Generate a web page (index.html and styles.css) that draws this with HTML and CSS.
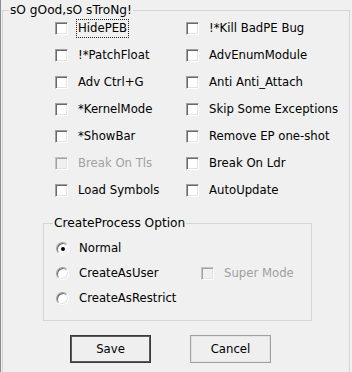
FILE: index.html
```html
<!DOCTYPE html>
<html lang="en">
<head>
    <meta charset="UTF-8">
    <meta name="viewport" content="width=device-width, initial-scale=1.0">
    <title>Options</title>
    <link rel="stylesheet" href="styles.css">
</head>
<body>
    <fieldset class="group main-group">
        <legend>sO gOod,sO sTroNg!</legend>

        <div class="opts">
            <label class="opt"><span class="box"></span><span class="txt focus">HidePEB</span></label>
            <label class="opt"><span class="box"></span><span class="txt">!*Kill BadPE Bug</span></label>
            <label class="opt"><span class="box"></span><span class="txt">!*PatchFloat</span></label>
            <label class="opt"><span class="box"></span><span class="txt">AdvEnumModule</span></label>
            <label class="opt"><span class="box"></span><span class="txt">Adv Ctrl+G</span></label>
            <label class="opt"><span class="box"></span><span class="txt">Anti Anti_Attach</span></label>
            <label class="opt"><span class="box"></span><span class="txt">*KernelMode</span></label>
            <label class="opt"><span class="box"></span><span class="txt">Skip Some Exceptions</span></label>
            <label class="opt"><span class="box"></span><span class="txt">*ShowBar</span></label>
            <label class="opt"><span class="box"></span><span class="txt">Remove EP one-shot</span></label>
            <label class="opt disabled"><span class="box"></span><span class="txt">Break On Tls</span></label>
            <label class="opt"><span class="box"></span><span class="txt">Break On Ldr</span></label>
            <label class="opt"><span class="box"></span><span class="txt">Load Symbols</span></label>
            <label class="opt"><span class="box"></span><span class="txt">AutoUpdate</span></label>
        </div>

        <fieldset class="group proc-group">
            <legend>CreateProcess Option</legend>
            <div class="proc-opts">
                <label class="opt"><span class="radio checked"></span><span class="txt">Normal</span></label>
                <span></span>
                <label class="opt"><span class="radio"></span><span class="txt">CreateAsUser</span></label>
                <label class="opt disabled"><span class="box"></span><span class="txt">Super Mode</span></label>
                <label class="opt"><span class="radio"></span><span class="txt">CreateAsRestrict</span></label>
            </div>
        </fieldset>

        <div class="buttons">
            <button class="btn btn-default">Save</button>
            <button class="btn">Cancel</button>
        </div>
    </fieldset>
</body>
</html>
```

FILE: styles.css
```css
html, body {
    margin: 0;
    height: 100%;
    overflow: hidden;
}
body {
    background-color: #f0f0f0;
    font-family: "DejaVu Sans", Tahoma, sans-serif;
    font-size: 11.7px;
    color: #000;
    box-shadow: inset 1px 0 0 #8c8c8c;
}
.group {
    border: 1px solid #d5d5d5;
    margin: 0;
    padding: 0;
    min-width: 0;
}
.group legend {
    padding: 0 1px;
    line-height: 14px;
    font-size: 12.2px;
}
.main-group {
    margin: 3px 2px 0 2px;
    height: 420px;
}
.main-group > legend {
    margin-left: 6px;
}
.opts {
    display: grid;
    grid-template-columns: 131px auto;
    grid-auto-rows: 13px;
    row-gap: 14px;
    padding: 5px 0 0 52px;
}
.opt {
    display: flex;
    align-items: center;
    gap: 8px;
    height: 13px;
    white-space: nowrap;
}
.txt {
    display: inline-block;
    line-height: 13px;
    padding: 0 1px;
    border: 1px solid transparent;
}
.txt.focus {
    border: 1px dotted #222;
    padding: 2px 1px;
    margin: -3px 0;
}
.box {
    flex: none;
    width: 13px;
    height: 13px;
    box-sizing: border-box;
    background-color: #fff;
    border: 1px solid;
    border-color: #a0a0a0 #fff #fff #a0a0a0;
    box-shadow: inset 1px 1px 0 #696969, inset -1px -1px 0 #e3e3e3;
}
.radio {
    flex: none;
    position: relative;
    width: 13px;
    height: 13px;
    border-radius: 50%;
    box-sizing: border-box;
    background-color: #fff;
    border: 1px solid;
    border-color: #a0a0a0 #fff #fff #a0a0a0;
    box-shadow: inset 1px 1px 0 #696969, inset -1px -1px 0 #e3e3e3;
}
.radio.checked::after {
    content: "";
    position: absolute;
    left: 4px;
    top: 4px;
    width: 4px;
    height: 4px;
    border-radius: 50%;
    background-color: #000;
}
.disabled {
    color: #a0a0a0;
}
.disabled .box {
    background-color: #f0f0f0;
    border-color: #c4c4c4 #fff #fff #c4c4c4;
    box-shadow: inset 1px 1px 0 #a0a0a0, inset -1px -1px 0 #e3e3e3;
}
.proc-group {
    margin: 19px 0 0 40px;
    width: 269px;
    box-sizing: border-box;
}
.proc-group > legend {
    margin-left: 9px;
}
.proc-opts {
    display: grid;
    grid-template-columns: 145px auto;
    grid-auto-rows: 13px;
    row-gap: 12px;
    padding: 12px 0 15px 12px;
}
.buttons {
    display: flex;
    gap: 39px;
    padding: 14px 0 0 67px;
}
.btn {
    width: 81px;
    height: 28px;
    font-family: inherit;
    font-size: inherit;
    color: #000;
    background-color: #efefef;
    border: 1px solid #a0a0a0;
    box-shadow: inset 0 0 0 1px #e3e3e3;
    padding: 0;
}
.btn-default {
    border: 1px solid #3a3a3a;
    box-shadow: inset 0 0 0 1px #5a5a5a;
}
```
